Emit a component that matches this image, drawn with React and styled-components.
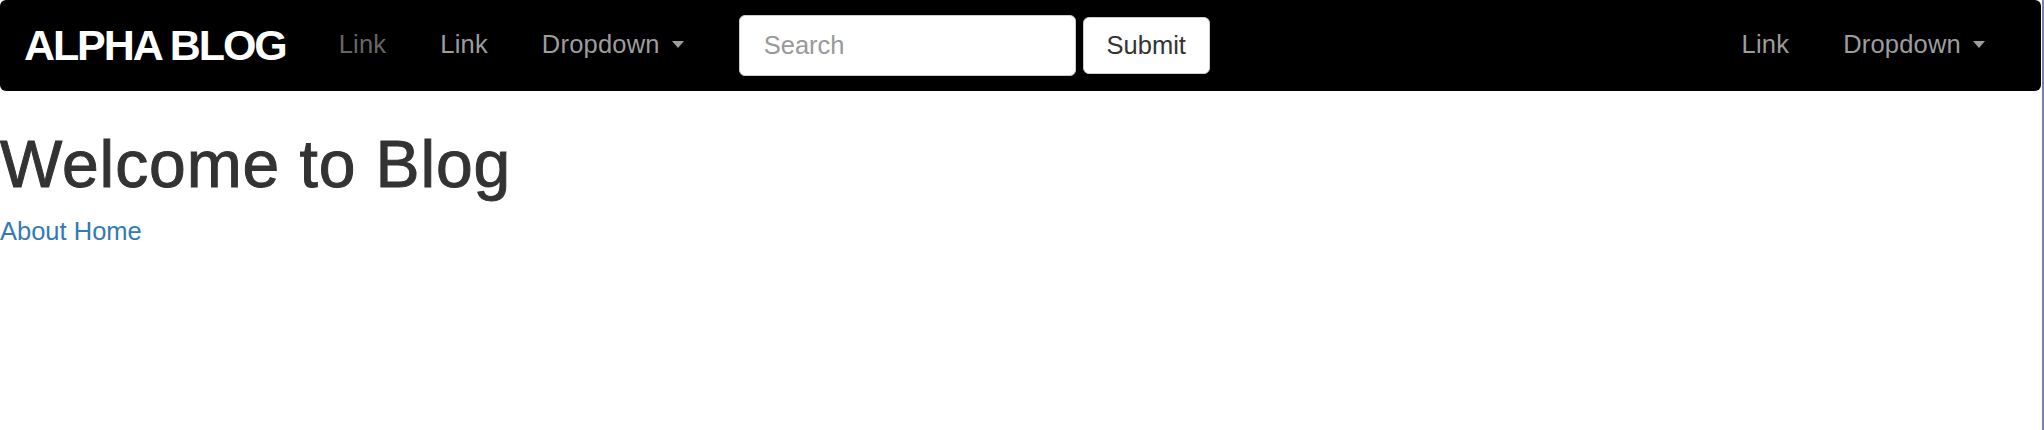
import React from 'react';
import styled, { createGlobalStyle } from 'styled-components';

const GlobalStyle = createGlobalStyle`
  html, body {
    margin: 0;
    padding: 0;
    background: #fff;
  }
  body {
    font-family: 'Liberation Sans', Helvetica, Arial, sans-serif;
    color: #333;
  }
`;

const App = () => {
  return (
    <Page>
      <GlobalStyle />
      <Navbar>
        <Brand href="#">ALPHA BLOG</Brand>
        <NavList>
          <NavItem href="#" muted>
            Link
          </NavItem>
          <NavItem href="#">Link</NavItem>
          <NavItem href="#">
            Dropdown
            <Caret />
          </NavItem>
        </NavList>
        <SearchForm onSubmit={(e) => e.preventDefault()}>
          <SearchInput type="text" placeholder="Search" />
          <SubmitButton type="submit">Submit</SubmitButton>
        </SearchForm>
        <NavList right>
          <NavItem href="#">Link</NavItem>
          <NavItem href="#">
            Dropdown
            <Caret />
          </NavItem>
        </NavList>
      </Navbar>
      <Title>Welcome to Blog</Title>
      <AboutLink href="#">About Home</AboutLink>
    </Page>
  );
};
export default App;

const Page = styled.div`
  box-sizing: border-box;
  min-height: 430px;
  border-right: 2px solid #6d88ab;
`;
const Navbar = styled.nav`
  display: flex;
  align-items: center;
  height: 91px;
  box-sizing: border-box;
  margin-right: 1px;
  padding: 0 29px 4px 24px;
  background: #000;
  border-radius: 6px;
`;
const Brand = styled.a`
  padding-top: 3px;
  margin-right: 26px;
  font-size: 43px;
  line-height: 43px;
  font-weight: bold;
  letter-spacing: -2.1px;
  color: #fff;
  text-decoration: none;
`;
const NavList = styled.div`
  display: flex;
  align-items: center;
  margin-left: ${(p) => (p.right ? 'auto' : '0')};
`;
const NavItem = styled.a`
  display: flex;
  align-items: center;
  padding: 0 27px;
  font-size: 25.5px;
  line-height: 36px;
  letter-spacing: 0.2px;
  color: ${(p) => (p.muted ? '#666' : '#9d9d9d')};
  text-decoration: none;
`;
const Caret = styled.span`
  display: inline-block;
  width: 0;
  height: 0;
  margin-left: 12px;
  margin-top: 2px;
  border-top: 7px solid #9d9d9d;
  border-left: 6.5px solid transparent;
  border-right: 6.5px solid transparent;
`;
const SearchForm = styled.form`
  display: flex;
  align-items: center;
  gap: 7px;
  margin: 0;
  padding: 4px 27px 0 28px;
`;
const SearchInput = styled.input`
  box-sizing: border-box;
  width: 337px;
  height: 61px;
  padding: 0 24px;
  font-family: inherit;
  font-size: 25.5px;
  color: #555;
  background: #fff;
  border: 1px solid #ccc;
  border-radius: 6px;
  outline: none;
  &::placeholder {
    color: #999;
  }
`;
const SubmitButton = styled.button`
  box-sizing: border-box;
  width: 127px;
  height: 57px;
  padding: 0;
  font-family: inherit;
  font-size: 25.5px;
  color: #333;
  background: #fff;
  border: 1px solid #ccc;
  border-radius: 6px;
`;
const Title = styled.h1`
  margin: 37px 0 12px;
  font-size: 66px;
  line-height: 72.6px;
  font-weight: 500;
  letter-spacing: 0.9px;
  -webkit-text-stroke: 1px #333;
  color: #333;
`;
const AboutLink = styled.a`
  display: block;
  font-size: 25.5px;
  line-height: 36px;
  color: #337ab7;
  text-decoration: none;
`;
